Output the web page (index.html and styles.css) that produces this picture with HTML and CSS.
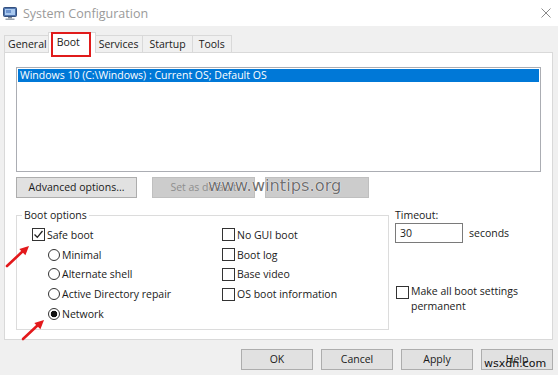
FILE: index.html
```html
<!DOCTYPE html>
<html>
<head>
<meta charset="utf-8">
<link rel="stylesheet" href="styles.css">
</head>
<body>
<div class="window">
  <div class="titlebar">
    <svg class="app-icon" viewBox="0 0 14 13">
      <rect x="0.5" y="0.5" width="13" height="9" rx="1" fill="#4f74ad" stroke="#34507e"/>
      <rect x="2" y="2" width="10" height="6" fill="#a9c9ef"/>
      <rect x="3" y="3" width="5" height="3" fill="#6f95cf"/>
      <rect x="5" y="10" width="4" height="1.5" fill="#7d8794"/>
      <rect x="2.5" y="11.5" width="9" height="1.5" fill="#9aa3ad"/>
    </svg>
    <span class="title">System Configuration</span>
    <svg class="close" viewBox="0 0 10 10"><path d="M0.5 0.5 L9.5 9.5 M9.5 0.5 L0.5 9.5" stroke="#8a8a8a" stroke-width="1"/></svg>
  </div>
  <div class="tabs">
    <div class="tab tab-general">General</div>
    <div class="tab active">Boot</div>
    <div class="tab tab-services">Services</div>
    <div class="tab">Startup</div>
    <div class="tab">Tools</div>
  </div>
  <div class="panel">
    <div class="listbox">
      <div class="item selected">Windows 10 (C:\Windows) : Current OS; Default OS</div>
    </div>
    <div class="btnrow">
      <button class="btn btn-adv">Advanced options...</button>
      <button class="btn btn-dis btn-def">Set as default</button>
      <button class="btn btn-dis btn-del">Delete</button>
    </div>
    <div class="lower">
      <fieldset class="group">
        <legend>Boot options</legend>
        <div class="cols">
          <div class="col col-left">
            <div class="opt"><span class="cb"><svg viewBox="0 0 11 11"><path d="M1.5 5.5 L4.3 8.3 L9.5 2" fill="none" stroke="#222" stroke-width="1.3"/></svg></span>Safe boot</div>
            <div class="opt sub"><span class="rb"></span>Minimal</div>
            <div class="opt sub"><span class="rb"></span>Alternate shell</div>
            <div class="opt sub"><span class="rb"></span>Active Directory repair</div>
            <div class="opt sub"><span class="rb on"></span>Network</div>
          </div>
          <div class="col">
            <div class="opt"><span class="cb"></span>No GUI boot</div>
            <div class="opt"><span class="cb"></span>Boot log</div>
            <div class="opt"><span class="cb"></span>Base video</div>
            <div class="opt"><span class="cb"></span>OS boot information</div>
          </div>
        </div>
      </fieldset>
      <div class="side">
        <div class="side-label">Timeout:</div>
        <div class="timeout-row">
          <div class="input">30</div>
          <span class="unit">seconds</span>
        </div>
        <div class="permanent">
          <span class="cb"></span>
          <span class="perm-text">Make all boot settings permanent</span>
        </div>
      </div>
    </div>
  </div>
  <div class="footer">
    <button class="btn btn-foot">OK</button>
    <button class="btn btn-foot">Cancel</button>
    <button class="btn btn-foot">Apply</button>
    <button class="btn btn-foot">Help</button>
  </div>

  <span class="watermark">www.wintips.org</span>
  <span class="watermark2">wsxdn.com</span>
  <svg class="arrows" viewBox="0 0 558 375" width="558" height="375">
    <path d="M7 266 L23 251" stroke="#e3191c" stroke-width="2.6" stroke-linecap="round"/>
    <polygon points="29,246 25.4,255.2 19.3,249" fill="#e3191c"/>
    <path d="M23 339 L38 325" stroke="#e3191c" stroke-width="2.6" stroke-linecap="round"/>
    <polygon points="44,320 40.4,329.2 34.3,323" fill="#e3191c"/>
  </svg>
</div>
</body>
</html>
```
FILE: styles.css
```css
* { box-sizing: border-box; }
body {
  margin: 0;
  background: #f0f0f0;
  font-family: "Open Sans", "Noto Sans", sans-serif;
  font-size: 10.5px;
  color: #1a1a1a;
}
.window {
  position: relative;
  width: 558px;
  height: 375px;
  background: #f0f0f0;
  overflow: hidden;
}
.titlebar {
  height: 26px;
  background: #fff;
  display: flex;
  align-items: center;
  padding-left: 3px;
}
.app-icon { width: 14px; height: 13px; margin-right: 6px; flex: none; }
.title { font-size: 12.5px; color: #9a9a9a; }
.close { margin-left: auto; margin-right: 7px; width: 10px; height: 10px; }

.tabs {
  height: 26px;
  display: flex;
  align-items: flex-end;
  padding-left: 4px;
}
.tab {
  position: relative;
  height: 17px;
  line-height: 15px;
  padding: 1px 6px 0;
  border: 1px solid #d9d9d9;
  border-bottom: none;
  background: #f0f0f0;
  margin-right: -1px;
  white-space: nowrap;
}
.tab-general { padding: 1px 3px 0; }
.tab-services { padding: 1px 4px 0; }
.tab.active {
  height: 21px;
  width: 48px;
  line-height: 17px;
  background: #fff;
  margin: 0 -2px -1px -2px;
  padding: 1px 0 0 8px;
  z-index: 1;
}
.tab.active::after {
  content: "";
  position: absolute;
  left: 2px;
  right: 4px;
  top: -1px;
  bottom: -4px;
  border: 2px solid #e01b1b;
}

.panel {
  height: 288px;
  margin: 0 5px 0 4px;
  background: #fff;
  border: 1px solid #d9d9d9;
  padding: 14px 0 0 11px;
}
.listbox {
  width: 525px;
  height: 105px;
  border: 1px solid #abadb3;
  padding: 1px;
  background: #fff;
}
.item {
  height: 13px;
  line-height: 13px;
  padding-left: 2px;
  white-space: nowrap;
}
.item.selected { background: #0078d7; color: #fff; }

.btnrow {
  display: flex;
  margin-top: 5px;
  height: 21px;
}
.btn {
  font: inherit;
  color: #1a1a1a;
  background: #e1e1e1;
  border: 1px solid #adadad;
  height: 21px;
  padding: 0;
  line-height: 17px;
}
.btn-adv { width: 121px; }
.btn-dis { background: #cccccc; border-color: #bfbfbf; color: #8e8e8e; }
.btn-def { width: 103px; margin-left: 15px; }
.btn-del { width: 104px; margin-left: 10px; color: #cccccc; }

.lower {
  display: flex;
  margin-top: 10px;
}
.group {
  margin: 0;
  width: 373px;
  height: 122px;
  border: 1px solid #dcdcdc;
  padding: 3px 0 0 5px;
  min-width: 0;
}
.group legend {
  padding: 0 2px;
  line-height: 14px;
}
.cols { display: flex; margin-left: 10px; }
.col-left { width: 190px; }
.opt {
  display: flex;
  align-items: center;
  height: 19.75px;
  white-space: nowrap;
}
.opt.sub { padding-left: 16px; }
.cb {
  width: 13px;
  height: 13px;
  border: 1px solid #333;
  background: #fff;
  margin-right: 2px;
  flex: none;
  display: flex;
  align-items: center;
  justify-content: center;
}
.cb svg { width: 11px; height: 11px; }
.rb {
  width: 12px;
  height: 12px;
  border: 1px solid #333;
  border-radius: 50%;
  background: #fff;
  margin-right: 2px;
  flex: none;
}
.rb.on { background: radial-gradient(circle, #111 0 3px, #fff 3.6px); }

.side { margin-left: 6px; }
.side-label { line-height: 14px; }
.timeout-row {
  display: flex;
  align-items: center;
  margin-top: 1px;
}
.input {
  width: 68px;
  height: 20px;
  border: 1px solid #7a7a7a;
  background: #fff;
  padding-left: 4px;
  line-height: 18px;
}
.unit { margin-left: 6px; }
.permanent {
  display: flex;
  align-items: flex-start;
  margin-top: 41px;
  padding-left: 1px;
}
.permanent .cb { margin-top: 2px; }
.perm-text { width: 118px; line-height: 15px; }

.footer {
  display: flex;
  justify-content: flex-end;
  gap: 8px;
  padding: 9px 5px 0 0;
}
.btn-foot { width: 72px; }

.watermark {
  position: absolute;
  left: 208px;
  top: 176px;
  font-family: "DejaVu Sans", sans-serif;
  font-size: 16.3px;
  color: #707070;
  text-shadow: 0 0 1px #fff, 0 0 1px #fff;
}
.watermark2 {
  position: absolute;
  left: 484px;
  top: 357px;
  font-family: "DejaVu Sans", sans-serif;
  font-size: 11px;
  color: #111;
}
.arrows {
  position: absolute;
  left: 0;
  top: 0;
  pointer-events: none;
}
```
